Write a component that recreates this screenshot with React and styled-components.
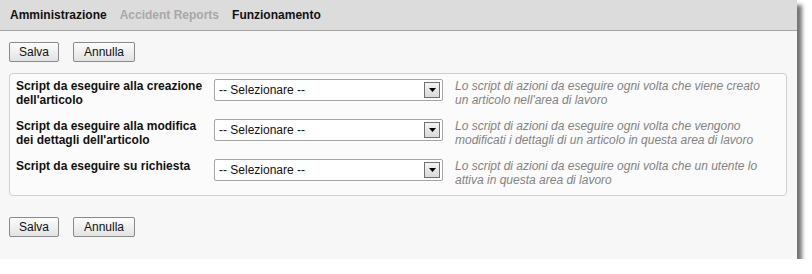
import React from 'react';
import styled, { createGlobalStyle } from 'styled-components';

const rows = [
	{
		id: 'create',
		label: "Script da eseguire alla creazione dell'articolo",
		hint: "Lo script di azioni da eseguire ogni volta che viene creato un articolo nell'area di lavoro",
	},
	{
		id: 'edit',
		label: "Script da eseguire alla modifica dei dettagli dell'articolo",
		hint: 'Lo script di azioni da eseguire ogni volta che vengono modificati i dettagli di un articolo in questa area di lavoro',
	},
	{
		id: 'request',
		label: 'Script da eseguire su richiesta',
		hint: 'Lo script di azioni da eseguire ogni volta che un utente lo attiva in questa area di lavoro',
	},
];

const tabs = [
	{ name: 'Amministrazione', muted: false },
	{ name: 'Accident Reports', muted: true },
	{ name: 'Funzionamento', muted: false },
];

const Actions = ({ bottom }) => (
	<ButtonRow $bottom={bottom}>
		<Button type="button" $width={50}>Salva</Button>
		<Button type="button" $width={62}>Annulla</Button>
	</ButtonRow>
);

const App = () => (
	<>
		<GlobalStyle />
		<Panel>
			<Header>
				{tabs.map((t) => (
					<Tab key={t.name} $muted={t.muted}>
						{t.name}
					</Tab>
				))}
			</Header>
			<Body>
				<Actions />
				<Fieldset>
					{rows.map((row) => (
						<Row key={row.id}>
							<Label htmlFor={row.id}>{row.label}</Label>
							<SelectWrap>
								<Select id={row.id} defaultValue="">
									<option value="">-- Selezionare --</option>
								</Select>
								<Arrow>
									<svg width="7" height="4" viewBox="0 0 7 4">
										<path d="M0 0h7L3.5 4z" fill="#000" />
									</svg>
								</Arrow>
							</SelectWrap>
							<Hint>{row.hint}</Hint>
						</Row>
					))}
				</Fieldset>
				<Actions bottom />
			</Body>
		</Panel>
	</>
);

const GlobalStyle = createGlobalStyle`
	body {
		margin: 0;
		background: #fff;
		font-family: "Liberation Sans", Arial, sans-serif;
		font-size: 12px;
	}
`;
const Panel = styled.div`
	width: 797px;
	height: 259px;
	background: #f7f7f7;
	box-shadow: 5px 5px 4px rgba(0, 0, 0, 0.55);
	display: flex;
	flex-direction: column;
`;
const Header = styled.div`
	height: 30px;
	background: #dcdcdc;
	border-bottom: 1px solid #a3a3a3;
	display: flex;
	align-items: center;
	padding-left: 10px;
	gap: 13px;
`;
const Tab = styled.span`
	font-weight: bold;
	font-size: 12px;
	color: ${(p) => (p.$muted ? '#a8a8a8' : '#111')};
`;
const Body = styled.div`
	padding: 11px 10px 0 9px;
	display: flex;
	flex-direction: column;
`;
const ButtonRow = styled.div`
	display: flex;
	gap: 14px;
	margin-top: ${(p) => (p.$bottom ? '21px' : '0')};
	margin-bottom: ${(p) => (p.$bottom ? '0' : '11px')};
`;
const Button = styled.button`
	width: ${(p) => p.$width}px;
	height: 20px;
	padding: 0;
	font-family: "Liberation Sans", Arial, sans-serif;
	font-size: 12px;
	color: #111;
	border: 1px solid #8a8a8a;
	border-radius: 2px;
	background: linear-gradient(#fdfdfd, #e2e2e2);
	cursor: pointer;
`;
const Fieldset = styled.div`
	border: 1px solid #cfcfcf;
	border-radius: 4px;
	background: #fbfbfb;
	padding: 5px 6px 8px 6px;
	display: flex;
	flex-direction: column;
	gap: 12px;
`;
const Row = styled.div`
	display: grid;
	grid-template-columns: 198px 229px 1fr;
	align-items: start;
`;
const Label = styled.label`
	font-weight: bold;
	font-size: 12px;
	line-height: 14px;
	color: #111;
	width: 192px;
`;
const SelectWrap = styled.div`
	position: relative;
	height: 22px;
`;
const Select = styled.select`
	appearance: none;
	width: 100%;
	height: 22px;
	margin: 0;
	padding: 0 0 0 4px;
	font-family: "Liberation Sans", Arial, sans-serif;
	font-size: 12px;
	color: #111;
	background: #fff;
	border: 1px solid #a5a5a5;
	border-radius: 2px;
	outline: none;
`;
const Arrow = styled.span`
	position: absolute;
	right: 3px;
	top: 3px;
	width: 14px;
	height: 14px;
	border: 1px solid #707070;
	background: linear-gradient(#f4f4f4, #d8d8d8);
	display: flex;
	align-items: center;
	justify-content: center;
	pointer-events: none;
`;
const Hint = styled.div`
	font-style: italic;
	font-size: 12px;
	line-height: 14px;
	color: #838383;
	padding-left: 12px;
	max-width: 320px;
`;

export default App;
